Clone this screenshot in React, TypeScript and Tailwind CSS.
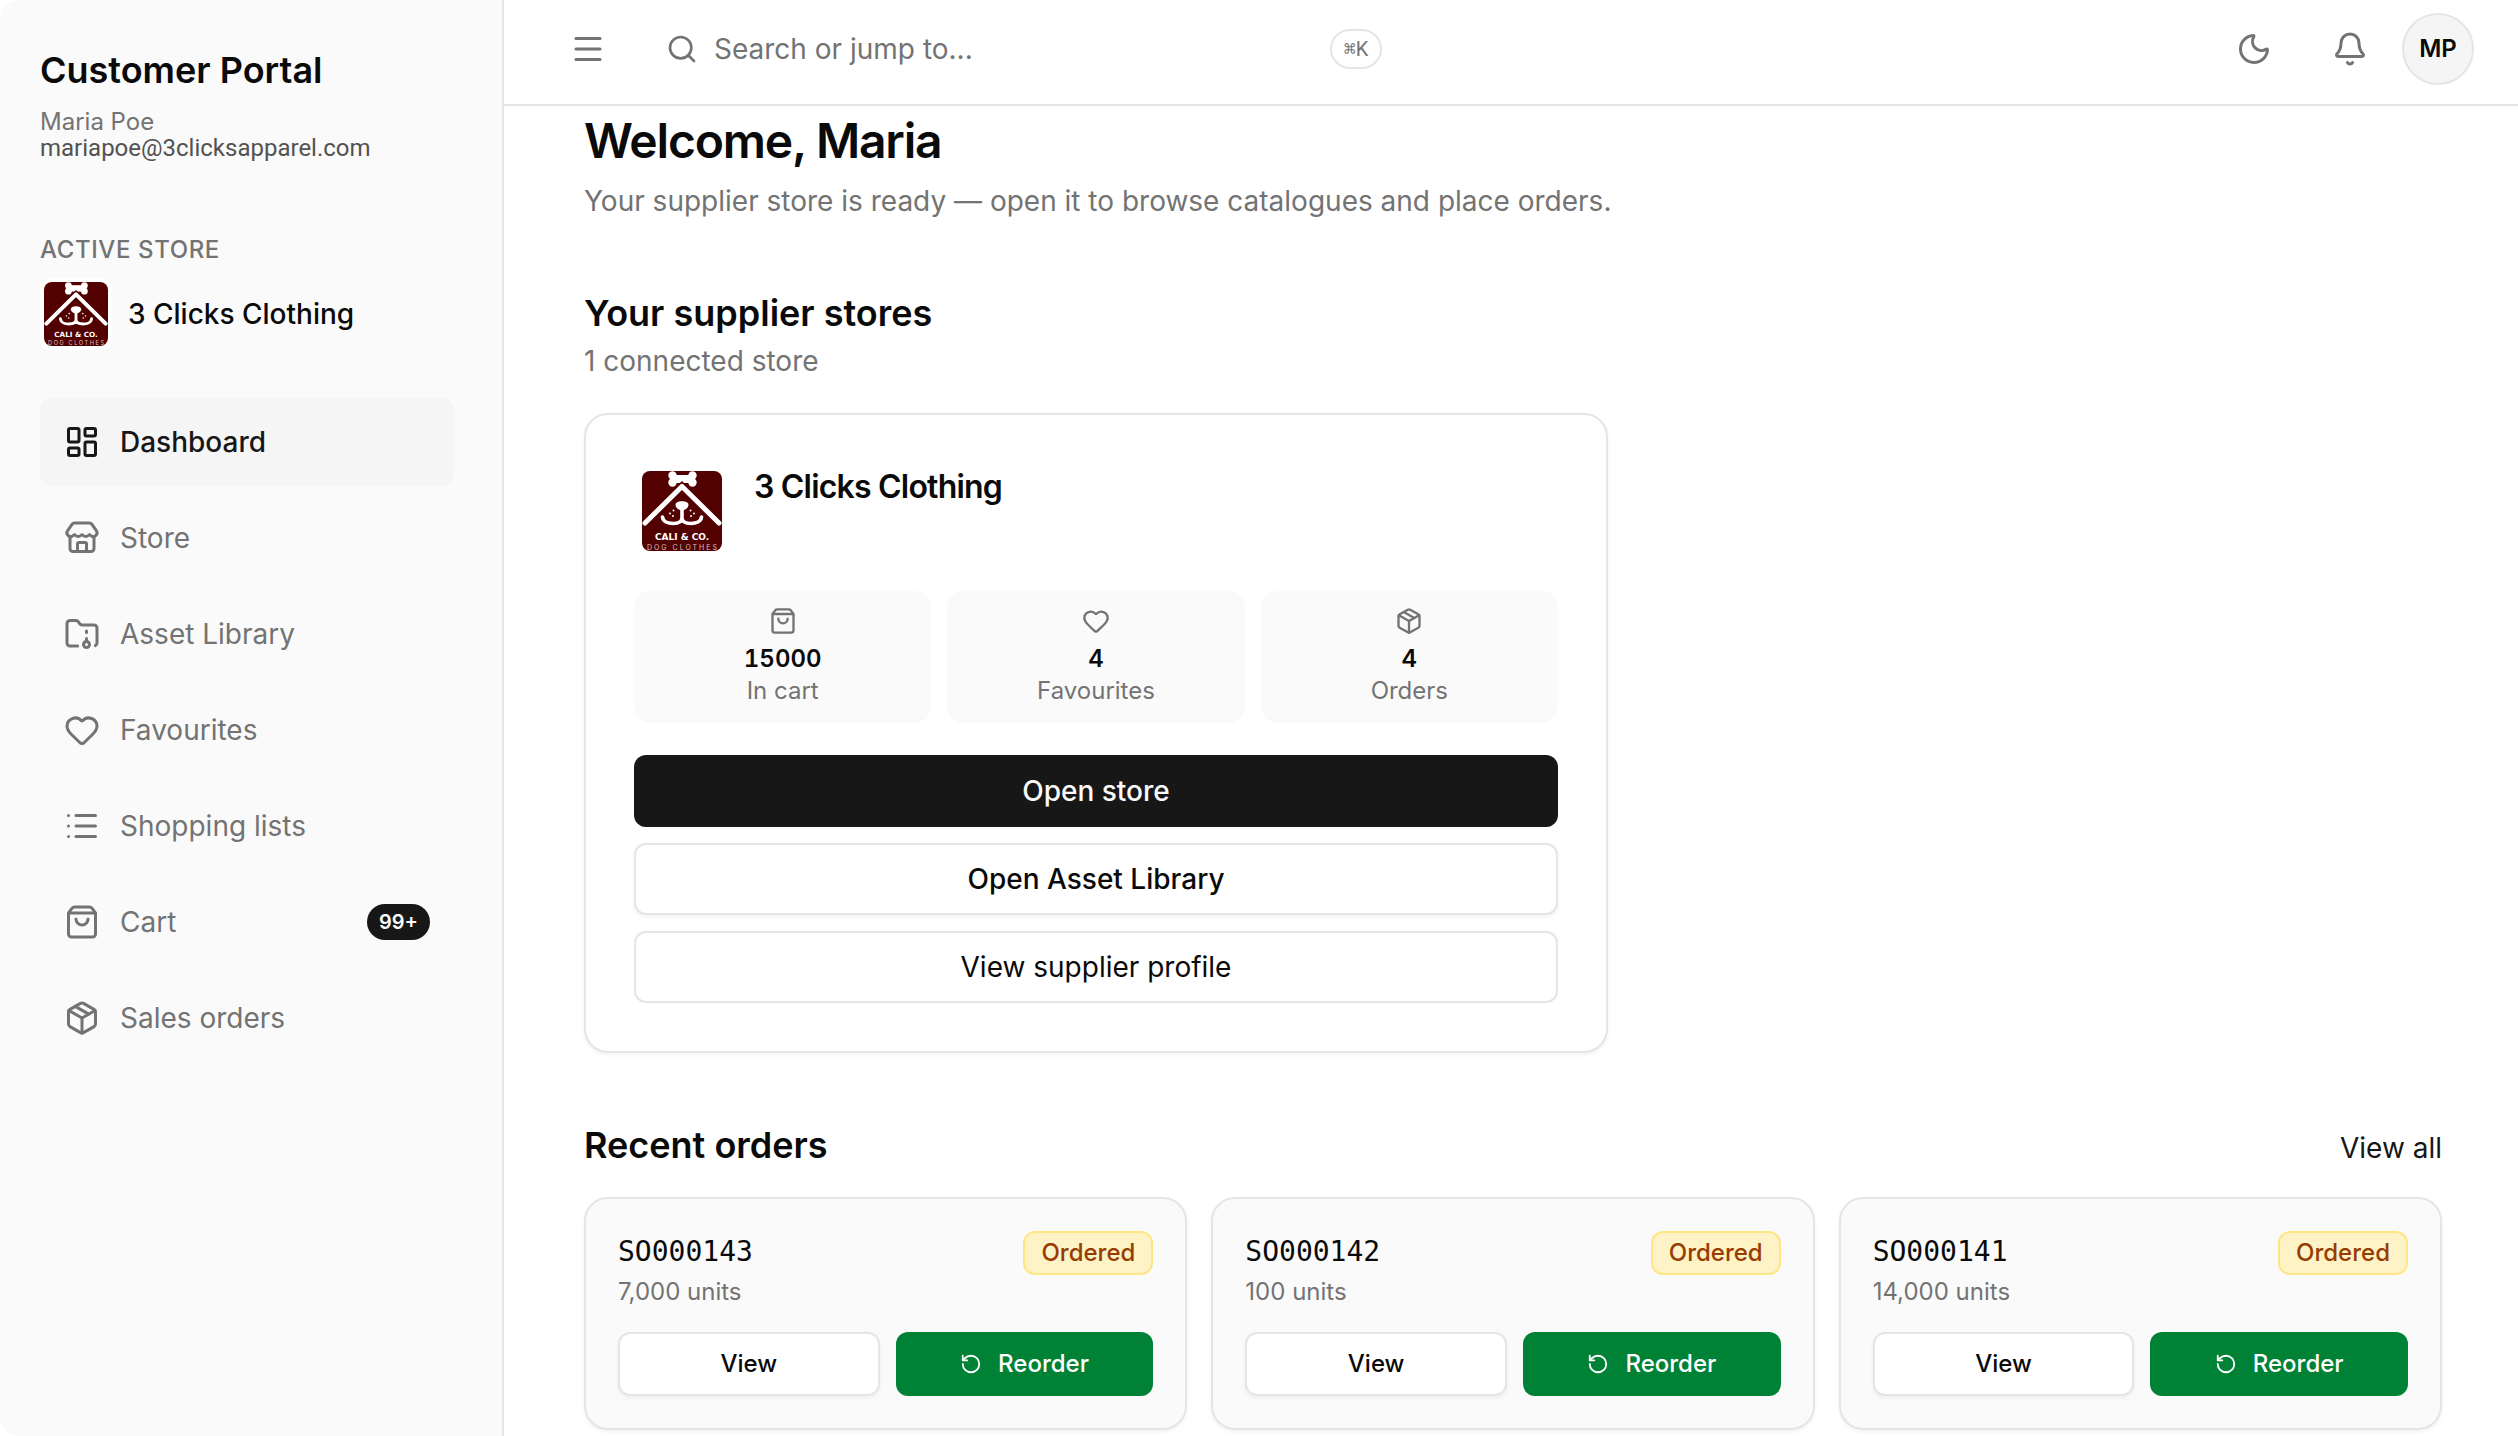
import {
  Bell,
  FolderArchive,
  Heart,
  LayoutDashboard,
  List,
  Menu,
  Moon,
  Package,
  RotateCcw,
  Search,
  ShoppingBag,
  Store,
} from "lucide-react";
import type { LucideIcon } from "lucide-react";
import clsx from "clsx";

interface NavItem {
  label: string;
  icon: LucideIcon;
  active?: boolean;
  badge?: string;
}

interface Order {
  id: string;
  units: string;
  status: string;
}

const NAV: NavItem[] = [
  { label: "Dashboard", icon: LayoutDashboard, active: true },
  { label: "Store", icon: Store },
  { label: "Asset Library", icon: FolderArchive },
  { label: "Favourites", icon: Heart },
  { label: "Shopping lists", icon: List },
  { label: "Cart", icon: ShoppingBag, badge: "99+" },
  { label: "Sales orders", icon: Package },
];

const STATS = [
  { label: "In cart", value: "15000", icon: ShoppingBag },
  { label: "Favourites", value: "4", icon: Heart },
  { label: "Orders", value: "4", icon: Package },
];

const ORDERS: Order[] = [
  { id: "SO000143", units: "7,000", status: "Ordered" },
  { id: "SO000142", units: "100", status: "Ordered" },
  { id: "SO000141", units: "14,000", status: "Ordered" },
];

function StoreLogo({ className }: { className?: string }) {
  return (
    <svg viewBox="0 0 80 80" className={className} role="img" aria-label="3 Clicks Clothing logo">
      <rect width="80" height="80" fill="#520000" />
      {/* bone */}
      <g fill="#fff">
        <rect x="30" y="4" width="21" height="8" />
        <circle cx="30.5" cy="4.5" r="4.2" />
        <circle cx="30.5" cy="11.5" r="4.2" />
        <circle cx="50.5" cy="4.5" r="4.2" />
        <circle cx="50.5" cy="11.5" r="4.2" />
      </g>
      {/* roof */}
      <path d="M3 52 L40 15.5 L77 52" fill="none" stroke="#520000" strokeWidth="8" />
      <path d="M3 52 L40 15.5 L77 52" fill="none" stroke="#fff" strokeWidth="5" strokeLinecap="round" strokeLinejoin="round" />
      {/* snout */}
      <path d="M33.5 34c0-2.500 2.500-3.700 6.500-3.700s6.500 1.200 6.500 3.700c0 3-4 5.500-6.500 5.500s-6.500-2.500-6.500-5.500z" fill="#fff" />
      <path d="M40 36v11c0 4-4 5.500-9 5.500s-10-2-10.500-6.500M40 47c0 4 4 5.500 9 5.500s10-2 10.500-6.500" fill="none" stroke="#fff" strokeWidth="3.600" strokeLinecap="round" />
      <g fill="#fff">
        <circle cx="31.500" cy="39.500" r="1" />
        <circle cx="28" cy="42.500" r="1" />
        <circle cx="31" cy="45" r="1" />
        <circle cx="48.500" cy="39.500" r="1" />
        <circle cx="52" cy="42.500" r="1" />
        <circle cx="49" cy="45" r="1" />
      </g>
      <text x="40" y="69" textAnchor="middle" fill="#fff" fontFamily="'DejaVu Sans', sans-serif" fontWeight="700" fontSize="9">
        CALI &amp; CO.
      </text>
      <text x="41" y="78.500" textAnchor="middle" fill="#d8c4c4" fontFamily="Inter, sans-serif" fontSize="7" letterSpacing="2">
        DOG CLOTHES
      </text>
    </svg>
  );
}

function Sidebar() {
  return (
    <aside className="w-[504px] shrink-0 rounded-l-[20px] border-r-2 border-neutral-200 bg-neutral-50 pt-12 pr-12 pl-10">
      <p className="text-4xl leading-[44px] font-semibold">Customer Portal</p>
      <p className="mt-[17px] text-2xl leading-[26px] text-neutral-500">Maria Poe</p>
      <p className="font-[Roboto,sans-serif] text-2xl leading-[26px] text-neutral-600">mariapoe@3clicksapparel.com</p>

      <p className="mt-[72px] text-2xl leading-[34px] font-medium tracking-wide text-neutral-500 uppercase">
        Active store
      </p>
      <div className="mt-[11px] flex items-center gap-4">
        <div className="size-[72px] rounded-xl bg-white p-1">
          <StoreLogo className="size-16 rounded-lg" />
        </div>
        <p className="text-[28px] leading-10 font-medium">3 Clicks Clothing</p>
      </div>

      <nav className="mt-12 flex flex-col gap-2">
        {NAV.map(({ label, icon: Icon, active, badge }) => (
          <a
            key={label}
            href="#"
            className={clsx(
              "flex h-[88px] items-center gap-5 rounded-xl px-6 text-[28px] leading-10",
              active ? "bg-neutral-100 font-medium text-neutral-900" : "text-neutral-500",
            )}
          >
            <Icon className="size-9 shrink-0" />
            <span className="flex-1">{label}</span>
            {badge && (
              <span className="flex h-9 items-center rounded-full bg-neutral-900 px-3 text-xl font-semibold text-neutral-50">
                {badge}
              </span>
            )}
          </a>
        ))}
      </nav>
    </aside>
  );
}

function TopBar() {
  return (
    <header className="flex h-[106px] shrink-0 items-center border-b-2 border-neutral-200 pr-11 pb-1.5 pl-12 text-neutral-500">
      <button aria-label="Toggle sidebar" className="flex size-[72px] items-center justify-center">
        <Menu className="size-9" />
      </button>
      <label className="ml-[42px] flex h-[72px] w-[740px] items-center gap-4">
        <Search className="size-8 shrink-0" />
        <input
          type="search"
          aria-label="Search"
          placeholder="Search or jump to..."
          className="min-w-0 flex-1 bg-transparent text-[28px] leading-10 outline-none placeholder:text-neutral-500"
        />
        <kbd className="mr-6 flex h-10 w-[52px] items-center justify-center rounded-full border-2 border-neutral-200 font-[Roboto,'DejaVu_Sans_Mono',monospace] text-xl">
          ⌘K
        </kbd>
      </label>
      <div className="ml-auto flex items-center gap-2">
        <button aria-label="Toggle theme" className="flex h-[72px] w-[88px] items-center justify-center">
          <Moon className="size-9" />
        </button>
        <button aria-label="Notifications" className="flex h-[72px] w-[88px] items-center justify-center">
          <Bell className="size-9" />
        </button>
        <button className="size-[72px] rounded-full border-2 border-neutral-200 bg-neutral-100 text-2xl font-semibold text-neutral-950">
          MP
        </button>
      </div>
    </header>
  );
}

function StoreCard() {
  return (
    <article className="w-full max-w-[1024px] rounded-3xl border-2 border-neutral-200 bg-white p-12 shadow-[0_2px_4px_rgba(0,0,0,0.05)]">
      <div className="flex items-start gap-6">
        <div className="size-24 p-2">
          <StoreLogo className="size-20 rounded-lg" />
        </div>
        <h3 className="text-[32px] leading-[48px] font-semibold tracking-tight">3 Clicks Clothing</h3>
      </div>

      <div className="mt-8 grid grid-cols-3 gap-4">
        {STATS.map(({ label, value, icon: Icon }) => (
          <div key={label} className="flex flex-col items-center rounded-2xl bg-neutral-50 py-4 text-2xl">
            <Icon className="mb-2 size-7 text-neutral-500" />
            <span className="font-semibold tabular-nums">{value}</span>
            <span className="text-neutral-500">{label}</span>
          </div>
        ))}
      </div>

      <div className="mt-8 flex flex-col gap-4 text-[28px] leading-10">
        <button className="h-[72px] rounded-xl bg-neutral-900 font-medium text-neutral-50">Open store</button>
        <button className="h-[72px] rounded-xl border-2 border-neutral-200 bg-white font-medium shadow-[0_2px_4px_rgba(0,0,0,0.05)]">
          Open Asset Library
        </button>
        <button className="h-[72px] rounded-xl border-2 border-neutral-200 bg-white">View supplier profile</button>
      </div>
    </article>
  );
}

function OrderCard({ order }: { order: Order }) {
  return (
    <article className="rounded-3xl border-2 border-neutral-200 bg-neutral-50 p-8 shadow-[0_2px_4px_rgba(0,0,0,0.05)]">
      <div className="flex items-start justify-between">
        <div>
          <p className="font-['DejaVu_Sans_Mono',monospace] text-[28px] leading-[42px]">{order.id}</p>
          <p className="mt-[3px] text-2xl text-neutral-500">{order.units} units</p>
        </div>
        <span className="flex h-11 items-center rounded-xl border-2 border-amber-200 bg-amber-100 px-4 text-2xl font-medium text-amber-800">
          {order.status}
        </span>
      </div>
      <div className="mt-6 flex gap-4 text-2xl font-medium">
        <button className="h-16 flex-1 rounded-xl border-2 border-neutral-200 bg-white shadow-[0_2px_4px_rgba(0,0,0,0.05)]">
          View
        </button>
        <button className="flex h-16 flex-1 items-center justify-center gap-4 rounded-xl bg-green-700 text-white">
          <RotateCcw className="size-[22px]" />
          Reorder
        </button>
      </div>
    </article>
  );
}

export default function App() {
  return (
    <div className="flex h-screen overflow-hidden bg-white font-[Inter,sans-serif] text-neutral-950">
      <Sidebar />
      <div className="flex min-w-0 flex-1 flex-col">
        <TopBar />
        <main className="min-h-0 flex-1 overflow-hidden pt-1 pr-[76px] pl-20">
          <h1 className="text-5xl leading-[62px] font-semibold tracking-tight">Welcome, Maria</h1>
          <p className="mt-[9px] text-[28px] leading-10 text-neutral-500">
            Your supplier store is ready — open it to browse catalogues and place orders.
          </p>

          <section className="mt-[68px]">
            <h2 className="text-4xl leading-[48px] font-semibold">Your supplier stores</h2>
            <p className="mt-1 mb-8 text-[28px] leading-10 text-neutral-500">1 connected store</p>
            <StoreCard />
          </section>

          <section className="mt-[68px]">
            <div className="flex items-baseline justify-between">
              <h2 className="text-4xl leading-[48px] font-semibold">Recent orders</h2>
              <a href="#" className="text-[28px] leading-10 text-neutral-900">
                View all
              </a>
            </div>
            <div className="mt-7 grid grid-cols-3 gap-6">
              {ORDERS.map((order) => (
                <OrderCard key={order.id} order={order} />
              ))}
            </div>
          </section>
        </main>
      </div>
    </div>
  );
}
